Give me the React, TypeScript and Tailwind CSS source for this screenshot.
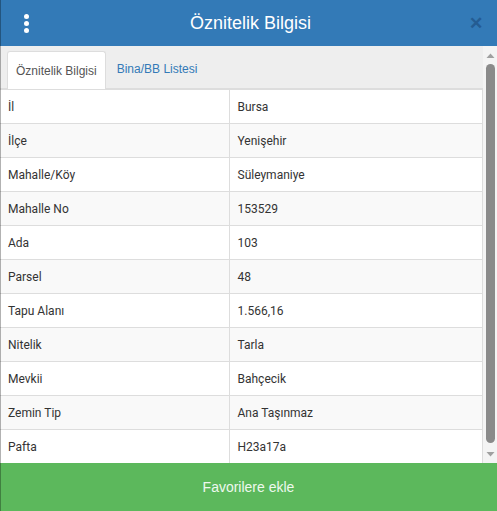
import React from "react";

const rows: [string, string][] = [
  ["İl", "Bursa"],
  ["İlçe", "Yenişehir"],
  ["Mahalle/Köy", "Süleymaniye"],
  ["Mahalle No", "153529"],
  ["Ada", "103"],
  ["Parsel", "48"],
  ["Tapu Alanı", "1.566,16"],
  ["Nitelik", "Tarla"],
  ["Mevkii", "Bahçecik"],
  ["Zemin Tip", "Ana Taşınmaz"],
  ["Pafta", "H23a17a"],
];

const App = () => {
  return (
    <div className="w-[497px] h-[511px] flex flex-col overflow-hidden bg-white font-['Liberation_Sans',Arial,sans-serif] relative">
      <div className="absolute left-0 top-0 bottom-0 w-px bg-black/30 z-10" />
      <div className="h-[46px] bg-[#337ab7] flex items-center justify-between px-[21px] shrink-0">
        <div className="flex flex-col gap-[2px] w-[8px] items-center pl-[2px]">
          <span className="w-[5px] h-[5px] rounded-full bg-white" />
          <span className="w-[5px] h-[5px] rounded-full bg-white" />
          <span className="w-[5px] h-[5px] rounded-full bg-white" />
        </div>
        <h1 className="text-white text-[18px] ml-[3px]">Öznitelik Bilgisi</h1>
        <span className="text-[#1f5083] opacity-70 font-bold text-[17px] leading-none mr-[-7px]">✕</span>
      </div>
      <div className="flex flex-1 min-h-0">
        <div className="flex-1 flex flex-col">
          <div className="h-[43px] bg-[#eeeeee] border-b border-[#dddddd] flex items-end pl-[7px] shrink-0">
            <div className="h-[38px] px-[8px] bg-white border border-[#dddddd] border-b-0 rounded-t-[3px] flex items-center text-[12px] text-[#555555] mb-[-1px]">
              Öznitelik Bilgisi
            </div>
            <div className="h-[38px] px-[11px] flex items-center text-[12px] text-[#337ab7]">
              Bina/BB Listesi
            </div>
          </div>
          <table className="w-full border-collapse text-[12px] text-[#333333] font-['Roboto',Arial,sans-serif]">
            <tbody>
              {rows.map(([k, v], i) => (
                <tr key={k} className={i % 2 === 1 ? "bg-[#f9f9f9]" : "bg-white"}>
                  <td className="h-[34px] w-[229px] border border-[#dddddd] border-l-0 pl-[8px]">{k}</td>
                  <td className="h-[34px] border border-[#dddddd] pl-[8px]">{v}</td>
                </tr>
              ))}
            </tbody>
          </table>
        </div>
        <div className="w-[14px] bg-[#f4f4f4] flex flex-col items-center pt-[2px] pb-[4px] shrink-0">
          <svg width="9" height="10" viewBox="0 0 9 10" className="mt-[3px]">
            <path d="M0.5 7 L4.5 2.5 L8.5 7 Z" fill="#a0a0a0" />
          </svg>
          <div className="w-[9px] flex-1 bg-[#8a8a8a] rounded-[5px] mt-[3px] mb-[6px]" />
          <svg width="9" height="10" viewBox="0 0 9 10">
            <path d="M0.5 3 L4.5 7.5 L8.5 3 Z" fill="#a0a0a0" />
          </svg>
        </div>
      </div>
      <button className="h-[48px] bg-[#5cb85c] text-[#eef8ee] text-[14px] shrink-0">
        Favorilere ekle
      </button>
    </div>
  );
};

export default App;
